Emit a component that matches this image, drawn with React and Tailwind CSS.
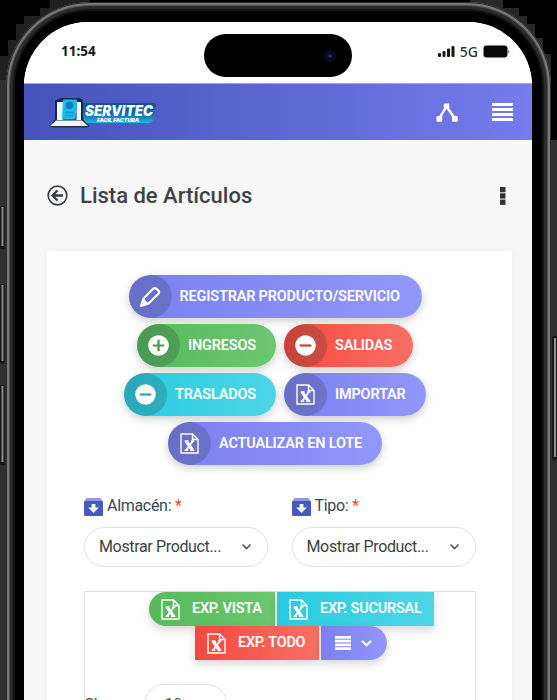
import React from "react";

const PURPLE = "bg-linear-to-r from-[#7a80f0] to-[#9297fa]";
const GREEN = "bg-linear-to-r from-[#55b95b] to-[#6cc770]";
const RED = "bg-linear-to-r from-[#f4473c] to-[#f96f66]";
const CYAN = "bg-linear-to-r from-[#26cbe0] to-[#4dd5e6]";

function ExcelIcon() {
  return (
    <svg width="19" height="21" viewBox="0 0 19 21" fill="none" stroke="#fff" strokeWidth="1.4" className="shrink-0">
      <path d="M1 1H12.5L18 6.5V20H1Z" />
      <path d="M12.5 1V6.5H18" />
      <path d="M6 8L12.6 17.3" strokeWidth="3.2" />
      <path d="M13 8L6 17.3" strokeWidth="1.8" />
      <path d="M4.7 8H8.5M11 8H14.3M4.7 17.3H8.2M10.5 17.3H14.3" />
    </svg>
  );
}

function PencilIcon() {
  return (
    <svg width="22" height="22" viewBox="0 0 22 22" fill="none" stroke="#fff" strokeWidth="2.2" strokeLinejoin="round">
      <path d="M2 20L4.500 12.700L14 2.800Q15.600 1.400 17.100 2.500L19.500 4.800Q20.800 6.200 19.400 7.700L9.500 17.500Z" />
      <path d="M4.500 13.200L9 17.500L2 20Z" fill="#fff" strokeWidth="1" />
    </svg>
  );
}

function CircleIcon({ plus, color }) {
  return (
    <svg width="21" height="21" viewBox="0 0 21 21">
      <circle cx="10.5" cy="10.5" r="10.3" fill="#fff" />
      <path d={plus ? "M4.7 10.5H16.3M10.5 4.7V16.3" : "M4.7 10.5H16.3"} stroke={color} strokeWidth="2.2" />
    </svg>
  );
}

function Pill({ tone, width, icon, children }) {
  return (
    <button className={`flex h-[43px] ${width} items-center rounded-full shadow-[0_3px_8px_rgba(0,0,0,0.2)] ${tone}`}>
      <span className="flex size-[43px] shrink-0 items-center justify-center rounded-full bg-[#263238]/22">{icon}</span>
      <span className="ml-2 text-[14.5px] font-semibold tracking-[-0.18px] whitespace-nowrap text-white">{children}</span>
    </button>
  );
}

function Field({ label }) {
  return (
    <div className="w-[184px]">
      <div className="flex h-6 items-center">
        <svg width="19" height="18" viewBox="0 0 20 18" preserveAspectRatio="none" className="mt-[2px] shrink-0">
          <path d="M2.5 0H17.5L20 4H0Z" fill="#8f99e0" />
          <rect y="3" width="20" height="15" rx="1" fill="#4a57c2" />
          <path d="M8 6H12V9.5H15.5L10 15L4.5 9.5H8Z" fill="#fff" />
        </svg>
        <span className="ml-1 text-[16px] tracking-[-0.3px] text-[#37474f]">
          {label} <span className="text-[#f44336]">*</span>
        </span>
      </div>
      <div className="mt-[9px] flex h-10 items-center justify-between rounded-full border border-[#e0e0e0] bg-white pr-[15px] pl-[14px]">
        <span className="text-[16px] tracking-[-0.35px] text-[#3c3f42]">Mostrar Product...</span>
        <svg width="11" height="8" viewBox="0 0 11 8" fill="none" stroke="#4a5560" strokeWidth="1.6">
          <path d="M1.5 1.5L5.5 5.5L9.5 1.5" />
        </svg>
      </div>
    </div>
  );
}

function Export({ tone, shape, children }) {
  return (
    <button className={`flex h-[34px] items-center text-[14.5px] font-semibold tracking-[-0.25px] whitespace-nowrap text-white shadow-[0_4px_8px_rgba(0,0,0,0.16)] ${shape} ${tone}`}>
      <ExcelIcon />
      <span className="ml-3">{children}</span>
    </button>
  );
}

function Logo() {
  return (
    <svg width="108" height="34" viewBox="0 0 108 34">
      <defs>
        <linearGradient id="plate" x1="0" y1="0" x2="0" y2="1">
          <stop offset="0" stopColor="#174c9a" />
          <stop offset="0.6" stopColor="#1173b8" />
          <stop offset="1" stopColor="#20b9df" />
        </linearGradient>
      </defs>
      <path d="M34 8H104Q107.500 8 107 11L104.500 24Q103.500 28 99 28H35Z" fill="url(#plate)" />
      <g transform="translate(0 2.500)">
        <path d="M6 3L12 0.500H30Q34 1 34 5V22L41 29H0L6 22Z" fill="#17264f" />
        <rect x="8" y="4.500" width="6" height="18" fill="#eefaff" />
        <rect x="27.500" y="4.500" width="4.500" height="18" fill="#eefaff" />
        <path d="M14 2H28L26.500 22H13Z" fill="#18bdea" />
        <circle cx="20.500" cy="7.800" r="3.800" fill="#157cb8" />
        <path d="M16 15H25M16 18H24" stroke="#159ccd" strokeWidth="1.500" />
        <path d="M7 23H33L39 28.500H1Z" fill="#f2f5f8" />
        <path d="M1 28.500H39L37 30H4Z" fill="#222d48" />
      </g>
      <text x="36" y="20.500" fontFamily="Inter, sans-serif" fontSize="14" fontWeight="900" fontStyle="italic" fill="#fff" textLength="68" lengthAdjust="spacingAndGlyphs">SERVITEC</text>
      <text x="48" y="26.500" fontFamily="Inter, sans-serif" fontSize="5" fontWeight="900" fontStyle="italic" fill="#fff" textLength="42" lengthAdjust="spacingAndGlyphs">FÁCIL FACTURA</text>
    </svg>
  );
}

function Backdrop() {
  return (
    <svg className="absolute inset-0" width="557" height="700" viewBox="0 0 557 700">
      <path d="M0 56H8V40H16V24H24V16H40V8H50V0H90V85H0Z" fill="#202020" />
      <path d="M470 0H503V8H519V16H527V24H535V38H543V54H551V85H470Z" fill="#282828" />
      <rect y="80" width="10" height="620" fill="#303030" />
      <rect x="549" y="140" width="8" height="560" fill="#303030" />
      {[[206, 43], [284, 80], [385, 80]].map(([y, h]) => (
        <g key={y}>
          <rect y={y} width="5" height={h} rx="1.500" fill="#181818" />
          <rect x="1.500" y={y + 1} width="2" height={h - 4} fill="#8b8986" />
        </g>
      ))}
      <rect x="552" y="336" width="5" height="124" rx="2" fill="#181818" />
      <rect x="554" y="338" width="2" height="119" fill="#94928f" />
    </svg>
  );
}

export default function App() {
  return (
    <div className="relative h-[700px] w-[557px] overflow-hidden bg-black font-['Roboto',sans-serif]">
      <Backdrop />
      <div className="relative mt-[2px] ml-[6px] h-[710px] w-[545px] overflow-hidden rounded-t-[84px] bg-black pt-[20px] pr-[19px] pl-[18px] shadow-[inset_0_0_0_1px_#2c2c2c,inset_0_0_0_3px_#777,inset_0_0_0_4px_#505050,inset_0_0_0_7px_#2a2a2a,inset_0_0_0_9px_#151515]">
        <main className="h-[690px] overflow-hidden rounded-t-[64px] bg-[#f7f7f7]">
          <div className="flex h-[62px] items-start border-b border-[#a8a8a8] bg-white pt-3 pr-[22px] pl-[37px]">
            <span className="mt-2 w-[143px] font-['Noto_Sans',sans-serif] text-[13.500px] leading-[18px] font-bold text-[#181818]">11:54</span>
            <div className="flex h-[43px] w-[148px] items-center justify-end rounded-full bg-black pr-[16px]">
              <span className="flex size-[12px] items-center justify-center rounded-full bg-[#0a0a22]">
                <span className="size-1 rounded-full bg-[#24246c]" />
              </span>
            </div>
            <div className="mt-2 ml-auto flex h-[18px] items-center justify-end">
              <svg width="17" height="11" viewBox="0 0 17 11" fill="#181818">
                <rect y="7" width="3" height="4" rx="1" />
                <rect x="4.500" y="5" width="3" height="6" rx="1" />
                <rect x="9" y="2.500" width="3" height="8.500" rx="1" />
                <rect x="13.500" width="3" height="11" rx="1" />
              </svg>
              <span className="ml-[5px] font-['Noto_Sans',sans-serif] text-[14px] font-medium text-[#333]">5G</span>
              <svg width="27" height="13" viewBox="0 0 27 13" fill="#080808" className="ml-[5px]">
                <rect x="0.500" y="0.500" width="24" height="12" rx="3" />
                <path d="M25.500 4.500Q27 6.500 25.500 8.500Z" />
              </svg>
            </div>
          </div>
          <header className="flex h-[56px] items-center justify-between bg-linear-to-r from-[#4553ba] to-[#757ced] pr-[19px] pl-[25px]">
            <Logo />
            <div className="flex items-center gap-[34px]">
              <svg width="22" height="19" viewBox="0 0 22 19" fill="#fff">
                <path d="M3.500 15L10.500 3.500L18.500 15" fill="none" stroke="#fff" strokeWidth="2.400" />
                <rect x="7.800" y="0.500" width="5.500" height="5" rx="1" />
                <rect x="0.500" y="13" width="5.700" height="5.700" rx="1" />
                <rect x="16" y="13" width="5.700" height="5.700" rx="1" />
              </svg>
              <svg width="21" height="18" viewBox="0 0 21 18" fill="#fff">
                <rect width="21" height="3" />
                <rect y="5" width="21" height="3" />
                <rect y="10" width="21" height="3" />
                <rect y="15" width="21" height="3" />
              </svg>
            </div>
          </header>
          <div className="flex h-[111px] items-center justify-between pr-[26px] pl-[23px]">
            <div className="flex items-center gap-3">
              <svg width="21" height="21" viewBox="0 0 21 21" fill="none" stroke="#3b3e42">
                <circle cx="10.500" cy="10.500" r="9.300" strokeWidth="1.700" />
                <path d="M16 10.500H6M10.500 5.500L5.500 10.500L10.500 15.500" strokeWidth="2.400" />
              </svg>
              <h1 className="text-[22px] leading-7 font-medium text-[#3f4347]">Lista de Artículos</h1>
            </div>
            <svg width="6" height="18" viewBox="0 0 6 18" fill="#333">
              <rect width="5.500" height="5.300" />
              <rect y="6.300" width="5.500" height="5.300" />
              <rect y="12.600" width="5.500" height="5.300" />
            </svg>
          </div>
          <section className="ml-[23px] h-[460px] w-[465px] bg-white pt-6 shadow-[0_0_8px_rgba(0,0,0,0.05)]">
            <div className="flex flex-col items-center gap-[6px] pr-[9px]">
              <Pill tone={PURPLE} width="w-[293px]" icon={<PencilIcon />}>REGISTRAR PRODUCTO/SERVICIO</Pill>
              <div className="flex gap-2">
                <Pill tone={GREEN} width="w-[139px]" icon={<CircleIcon plus color="#489b4e" />}>INGRESOS</Pill>
                <Pill tone={RED} width="w-[129px]" icon={<CircleIcon color="#c83c34" />}>SALIDAS</Pill>
              </div>
              <div className="flex gap-2">
                <Pill tone={CYAN} width="w-[152px]" icon={<CircleIcon color="#22a9bb" />}>TRASLADOS</Pill>
                <Pill tone={PURPLE} width="w-[142px]" icon={<ExcelIcon />}>IMPORTAR</Pill>
              </div>
              <Pill tone={PURPLE} width="w-[214px]" icon={<ExcelIcon />}>ACTUALIZAR EN LOTE</Pill>
            </div>
            <div className="mt-[29px] ml-[37px] flex gap-[23.500px]">
              <Field label="Almacén:" />
              <Field label="Tipo:" />
            </div>
            <div className="mt-6 ml-[37px] h-[140px] w-[392px] border border-[#e0e0e0]">
              <div className="ml-16 flex gap-[2px]">
                <Export tone={GREEN} shape="w-[126px] rounded-l-full pl-3">EXP. VISTA</Export>
                <Export tone={CYAN} shape="w-[157px] pl-3">EXP. SUCURSAL</Export>
              </div>
              <div className="ml-[110px] flex gap-[2px]">
                <Export tone={RED} shape="w-[124px] pl-3">EXP. TODO</Export>
                <button className="flex h-[34px] w-[66px] items-center gap-[10px] rounded-r-full bg-linear-to-r from-[#7a80f0] to-[#9297fa] pl-[14px] shadow-[0_4px_8px_rgba(0,0,0,0.16)]">
                  <svg width="16" height="14" viewBox="0 0 16 14" fill="#fff">
                    <rect width="16" height="2.700" />
                    <rect y="3.700" width="16" height="2.700" />
                    <rect y="7.500" width="16" height="2.700" />
                    <rect y="11.200" width="16" height="2.700" />
                  </svg>
                  <svg width="11" height="7" viewBox="0 0 11 7" fill="none" stroke="#fff" strokeWidth="2">
                    <path d="M1 1L5.500 5.300L10 1" />
                  </svg>
                </button>
              </div>
              <div className="mt-6 flex items-start text-[15px] text-[#444]">
                <span className="mt-[9px] w-[59px]">Show</span>
                <div className="h-10 w-[83px] rounded-full border border-[#e0e0e0] pt-2 pl-5">10</div>
              </div>
            </div>
          </section>
        </main>
      </div>
    </div>
  );
}
